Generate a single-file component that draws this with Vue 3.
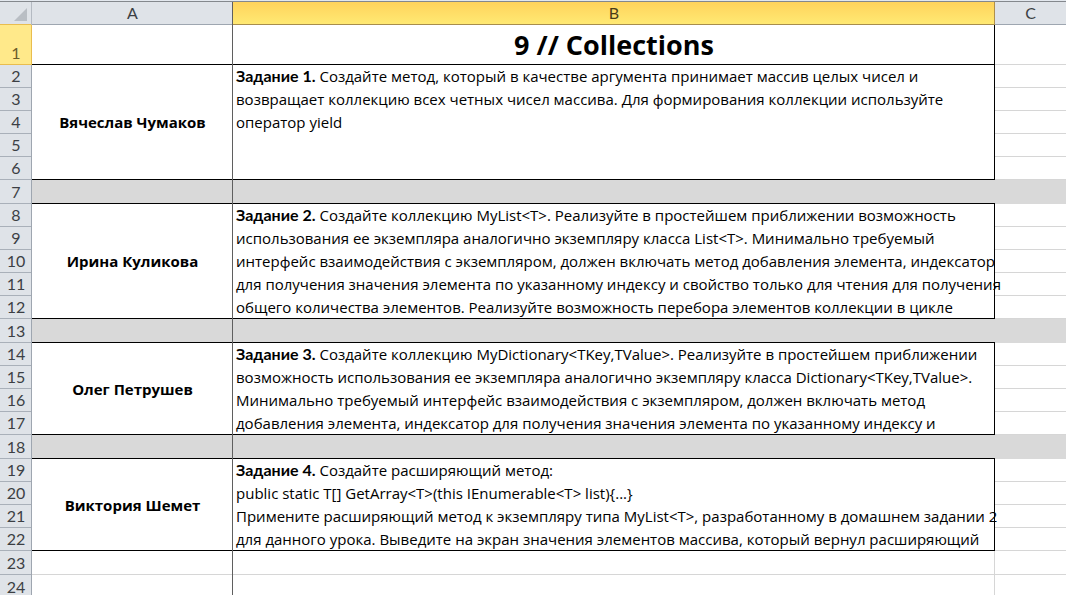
<script setup>
const groups = [
  {
    start: 2,
    rows: 5,
    name: 'Вячеслав Чумаков',
    title: 'Задание 1.',
    lines: [
      'Создайте метод, который в качестве аргумента принимает массив целых чисел и',
      'возвращает коллекцию всех четных чисел массива. Для формирования коллекции используйте',
      'оператор yield',
    ],
    divider: true,
  },
  {
    start: 8,
    rows: 5,
    name: 'Ирина Куликова',
    title: 'Задание 2.',
    lines: [
      'Создайте коллекцию MyList<T>. Реализуйте в простейшем приближении возможность',
      'использования ее экземпляра аналогично экземпляру класса List<T>. Минимально требуемый',
      'интерфейс взаимодействия с экземпляром, должен включать метод добавления элемента, индексатор',
      'для получения значения элемента по указанному индексу и свойство только для чтения для получения',
      'общего количества элементов. Реализуйте возможность перебора элементов коллекции в цикле',
    ],
    divider: true,
  },
  {
    start: 14,
    rows: 4,
    name: 'Олег Петрушев',
    title: 'Задание 3.',
    lines: [
      'Создайте коллекцию MyDictionary<TKey,TValue>. Реализуйте в простейшем приближении',
      'возможность использования ее экземпляра аналогично экземпляру класса Dictionary<TKey,TValue>.',
      'Минимально требуемый интерфейс взаимодействия с экземпляром, должен включать метод',
      'добавления элемента, индексатор для получения значения элемента по указанному индексу и',
    ],
    divider: true,
  },
  {
    start: 19,
    rows: 4,
    name: 'Виктория Шемет',
    title: 'Задание 4.',
    lines: [
      'Создайте расширяющий метод:',
      'public static T[] GetArray<T>(this IEnumerable<T> list){...}',
      'Примените расширяющий метод к экземпляру типа MyList<T>, разработанному в домашнем задании 2',
      'для данного урока. Выведите на экран значения элементов массива, который вернул расширяющий',
    ],
    divider: false,
  },
]
</script>

<template>
  <main class="sheet">
    <table class="grid">
      <colgroup>
        <col class="col-num" />
        <col class="col-a" />
        <col />
        <col class="col-c" />
      </colgroup>
      <thead>
        <tr class="letters">
          <th class="corner">
            <svg width="32" height="23" viewBox="0 0 32 23" aria-hidden="true">
              <path d="M27 6V19H14Z" fill="#b9bec4" />
            </svg>
          </th>
          <th class="letter before-b" scope="col">A</th>
          <th class="letter active" scope="col">B</th>
          <th class="letter last" scope="col">C</th>
        </tr>
      </thead>
      <tbody>
        <tr class="heading">
          <th class="num active-num" scope="row">1</th>
          <td class="boxed a"></td>
          <td class="boxed b title">9 // Collections</td>
          <td class="c"></td>
        </tr>
        <template v-for="g in groups" :key="g.start">
          <tr v-for="i in g.rows" :key="i" class="line">
            <th class="num" scope="row">{{ g.start + i - 1 }}</th>
            <td v-if="i === 1" class="boxed a name" :rowspan="g.rows">{{ g.name }}</td>
            <td v-if="i === 1" class="boxed b task" :rowspan="g.rows">
              <div v-for="(line, n) in g.lines" :key="n"><b v-if="n === 0">{{ g.title }}</b>{{ n === 0 ? ' ' : '' }}{{ line }}</div>
            </td>
            <td class="c"></td>
          </tr>
          <tr v-if="g.divider" class="divider">
            <th class="num" scope="row">{{ g.start + g.rows }}</th>
            <td class="boxed a"></td>
            <td class="under"></td>
            <td></td>
          </tr>
        </template>
        <tr v-for="n in [23, 24]" :key="n" class="blank">
          <th class="num" scope="row">{{ n }}</th>
          <td class="plain-a"></td>
          <td class="c"></td>
          <td class="c"></td>
        </tr>
      </tbody>
    </table>
  </main>
</template>

<style>
html,
body {
  background: #fff;
  overflow: hidden;
}
</style>

<style scoped>
.sheet {
  height: 100vh;
  overflow: hidden;
  box-sizing: border-box;
  padding-top: 1px;
  background: #e3e8ee;
  font-family: "Open Sans", "Noto Sans", sans-serif;
  font-size: 15px;
  font-variant-ligatures: none;
  line-height: 23px;
  color: #000;
}
.grid {
  width: 100%;
  table-layout: fixed;
  border-collapse: separate;
  border-spacing: 0;
  border-top: 1px solid #84888d;
  background: #fff;
}
.col-num {
  width: 32px;
}
.col-a {
  width: 201px;
}
.col-c {
  width: 71px;
}
th,
td {
  padding: 0;
  font-weight: 400;
}
.letters th {
  height: 23px;
  background: #dfe3e8;
  color: #3c3f44;
  font-family: Lato, sans-serif;
  font-size: 16px;
  line-height: 21px;
  vertical-align: top;
  box-shadow: inset -1px 0 #9ea6b0, inset 0 -1px #9ea6b0;
}
.letters .corner {
  box-shadow: inset -1px 0 #b4bac2, inset 0 -1px #e9bd4e;
}
.corner svg {
  display: block;
}
.letters .before-b {
  box-shadow: inset -1px 0 #5f5f5f, inset 0 -1px #9ea6b0;
}
.letters .last {
  box-shadow: inset 0 -1px #9ea6b0;
}
.letters .active {
  background: linear-gradient(#ffd35c, #ffea74);
  color: #4a3c18;
  box-shadow: inset -1px 0 #b0904a, inset 0 -1px #a88d4c;
}
.num {
  background: #dfe3e8;
  color: #3c3f44;
  font-family: Lato, sans-serif;
  font-size: 16px;
  line-height: 21px;
  padding-bottom: 2px;
  box-sizing: border-box;
  text-align: center;
  vertical-align: bottom;
  box-shadow: inset -1px 0 #9ea6b0, inset 0 -1px #a9b0b9;
}
.active-num {
  background: #ffe98a;
  color: #6b5c2b;
  box-shadow: inset -1px 0 #e9bd4e, inset 0 -1px #e9bd4e;
}
.heading > * {
  height: 40px;
}
.line > .num,
.line > .c {
  height: 23px;
}
.divider > *,
.blank > * {
  height: 24px;
}
.boxed.a {
  box-shadow: inset -1px 0 #5f5f5f, inset 0 -1px #000;
}
.boxed.b {
  box-shadow: inset -1px 0 #000, inset 0 -1px #000;
}
.c {
  box-shadow: inset -1px 0 #d6d6d6, inset 0 -1px #d6d6d6;
}
.c:last-child {
  box-shadow: inset 0 -1px #d6d6d6;
}
.plain-a {
  box-shadow: inset -1px 0 #5f5f5f, inset 0 -1px #d6d6d6;
}
.divider td {
  background: #d9d9d9;
}
.under {
  box-shadow: inset 0 -1px #000;
}
.title {
  font-size: 27px;
  font-weight: 700;
  line-height: 40px;
  text-align: center;
}
.name {
  font-weight: 700;
  text-align: center;
}
.task {
  padding-left: 3px;
  vertical-align: top;
  white-space: nowrap;
}
.task b {
  font-family: Lato, sans-serif;
  font-size: 16px;
  line-height: 21px;
}
</style>
